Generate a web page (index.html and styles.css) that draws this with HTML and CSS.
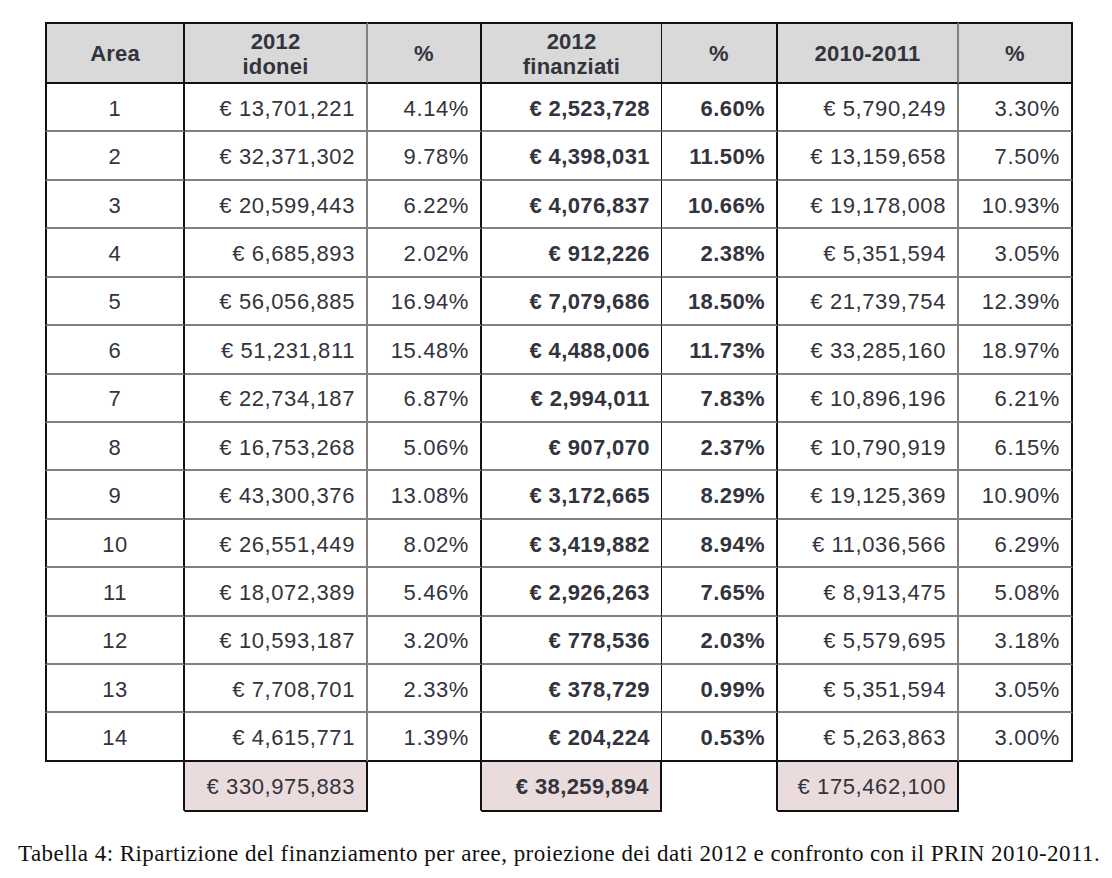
FILE: index.html
```html
<!DOCTYPE html>
<html lang="it">

<head>
    <meta charset="UTF-8">
    <meta name="viewport" content="width=device-width, initial-scale=1.0">
    <title>Tabella 4</title>
    <link rel="stylesheet" href="styles.css">
</head>

<body>
    <div id="wrapper">
        <table id="prin">
            <colgroup>
                <col class="c-area">
                <col class="c-money">
                <col class="c-pct">
                <col class="c-fin">
                <col class="c-pct2">
                <col class="c-money2">
                <col class="c-pct">
            </colgroup>
            <thead>
                <tr>
                    <th class="dark">Area</th>
                    <th>2012<br>idonei</th>
                    <th class="dark">%</th>
                    <th class="thin">2012<br>finanziati</th>
                    <th class="dark">%</th>
                    <th>2010-2011</th>
                    <th class="last">%</th>
                </tr>
            </thead>
            <tbody>
                <tr><td class="dark area">1</td><td>€ 13,701,221</td><td class="dark">4.14%</td><td class="thin b">€ 2,523,728</td><td class="dark b">6.60%</td><td>€ 5,790,249</td><td class="last">3.30%</td></tr>
                <tr><td class="dark area">2</td><td>€ 32,371,302</td><td class="dark">9.78%</td><td class="thin b">€ 4,398,031</td><td class="dark b">11.50%</td><td>€ 13,159,658</td><td class="last">7.50%</td></tr>
                <tr><td class="dark area">3</td><td>€ 20,599,443</td><td class="dark">6.22%</td><td class="thin b">€ 4,076,837</td><td class="dark b">10.66%</td><td>€ 19,178,008</td><td class="last">10.93%</td></tr>
                <tr><td class="dark area">4</td><td>€ 6,685,893</td><td class="dark">2.02%</td><td class="thin b">€ 912,226</td><td class="dark b">2.38%</td><td>€ 5,351,594</td><td class="last">3.05%</td></tr>
                <tr><td class="dark area">5</td><td>€ 56,056,885</td><td class="dark">16.94%</td><td class="thin b">€ 7,079,686</td><td class="dark b">18.50%</td><td>€ 21,739,754</td><td class="last">12.39%</td></tr>
                <tr><td class="dark area">6</td><td>€ 51,231,811</td><td class="dark">15.48%</td><td class="thin b">€ 4,488,006</td><td class="dark b">11.73%</td><td>€ 33,285,160</td><td class="last">18.97%</td></tr>
                <tr><td class="dark area">7</td><td>€ 22,734,187</td><td class="dark">6.87%</td><td class="thin b">€ 2,994,011</td><td class="dark b">7.83%</td><td>€ 10,896,196</td><td class="last">6.21%</td></tr>
                <tr><td class="dark area">8</td><td>€ 16,753,268</td><td class="dark">5.06%</td><td class="thin b">€ 907,070</td><td class="dark b">2.37%</td><td>€ 10,790,919</td><td class="last">6.15%</td></tr>
                <tr><td class="dark area">9</td><td>€ 43,300,376</td><td class="dark">13.08%</td><td class="thin b">€ 3,172,665</td><td class="dark b">8.29%</td><td>€ 19,125,369</td><td class="last">10.90%</td></tr>
                <tr><td class="dark area">10</td><td>€ 26,551,449</td><td class="dark">8.02%</td><td class="thin b">€ 3,419,882</td><td class="dark b">8.94%</td><td>€ 11,036,566</td><td class="last">6.29%</td></tr>
                <tr><td class="dark area">11</td><td>€ 18,072,389</td><td class="dark">5.46%</td><td class="thin b">€ 2,926,263</td><td class="dark b">7.65%</td><td>€ 8,913,475</td><td class="last">5.08%</td></tr>
                <tr><td class="dark area">12</td><td>€ 10,593,187</td><td class="dark">3.20%</td><td class="thin b">€ 778,536</td><td class="dark b">2.03%</td><td>€ 5,579,695</td><td class="last">3.18%</td></tr>
                <tr><td class="dark area">13</td><td>€ 7,708,701</td><td class="dark">2.33%</td><td class="thin b">€ 378,729</td><td class="dark b">0.99%</td><td>€ 5,351,594</td><td class="last">3.05%</td></tr>
                <tr class="lastrow"><td class="dark area">14</td><td>€ 4,615,771</td><td class="dark">1.39%</td><td class="thin b">€ 204,224</td><td class="dark b">0.53%</td><td>€ 5,263,863</td><td class="last">3.00%</td></tr>
            </tbody>
            <tfoot>
                <tr>
                    <td class="gap edge"></td>
                    <td class="total">€ 330,975,883</td>
                    <td class="gap edge"></td>
                    <td class="total thin b">€ 38,259,894</td>
                    <td class="gap edge"></td>
                    <td class="total">€ 175,462,100</td>
                    <td class="gap"></td>
                </tr>
            </tfoot>
        </table>
        <p class="caption">Tabella 4: Ripartizione del finanziamento per aree, proiezione dei dati 2012 e confronto con il PRIN 2010-2011.</p>
    </div>
</body>

</html>
```

FILE: styles.css
```css
body {
    margin: 0;
    background-color: #ffffff;
}

#wrapper {
    padding: 22px 0 0 18px;
}

#prin {
    margin-left: 27px;
    border-collapse: separate;
    border-spacing: 0;
    table-layout: fixed;
    width: 1028px;
    font-family: "Liberation Sans", Arial, sans-serif;
    font-size: 22px;
    letter-spacing: 0.6px;
    color: #33333d;
}

.c-area { width: 140px; }
.c-money { width: 183px; }
.c-pct { width: 114px; }
.c-fin { width: 180px; }
.c-pct2 { width: 116px; }
.c-money2 { width: 181px; }

#prin th,
#prin td {
    box-sizing: border-box;
    border-right: 2px solid #808080;
    border-bottom: 2px solid #808080;
    padding: 3px 11px 0 4px;
    text-align: right;
    white-space: nowrap;
}

#prin th {
    height: 62px;
    background-color: #d9d9d9;
    border-top: 2px solid #111111;
    border-bottom-color: #111111;
    text-align: center;
    font-weight: bold;
    line-height: 25px;
    letter-spacing: 0.2px;
    padding: 1px 4px 0;
}

#prin td {
    height: 48.43px;
    line-height: 24px;
}

#prin th:first-child,
#prin tbody td:first-child {
    border-left: 2px solid #111111;
}

#prin .dark {
    border-right-color: #111111;
}

#prin .thin {
    border-right: 1px solid #111111;
}

#prin .last {
    border-right-color: #111111;
}

#prin td.area {
    text-align: center;
    padding: 3px 4px 0;
}

#prin .b {
    font-weight: bold;
    letter-spacing: 0.4px;
}

#prin .lastrow td {
    border-bottom-color: #111111;
}

#prin tfoot td {
    height: 50px;
    border-bottom: 2px solid transparent;
}

#prin tfoot td:first-child {
    border-left: 2px solid transparent;
}

#prin tfoot td.gap {
    border-right-color: transparent;
}

#prin tfoot td.edge {
    border-right-color: #111111;
}

#prin tfoot td.total {
    background-color: #eadcdc;
    border-right-color: #111111;
    border-bottom-color: #111111;
}

#prin tfoot td.total.thin {
    border-right: 2px solid #111111;
}

.caption {
    margin: 29px 0 0;
    font-family: "Liberation Serif", "Times New Roman", serif;
    font-size: 23px;
    letter-spacing: 0.45px;
    color: #111111;
    white-space: nowrap;
}
```
